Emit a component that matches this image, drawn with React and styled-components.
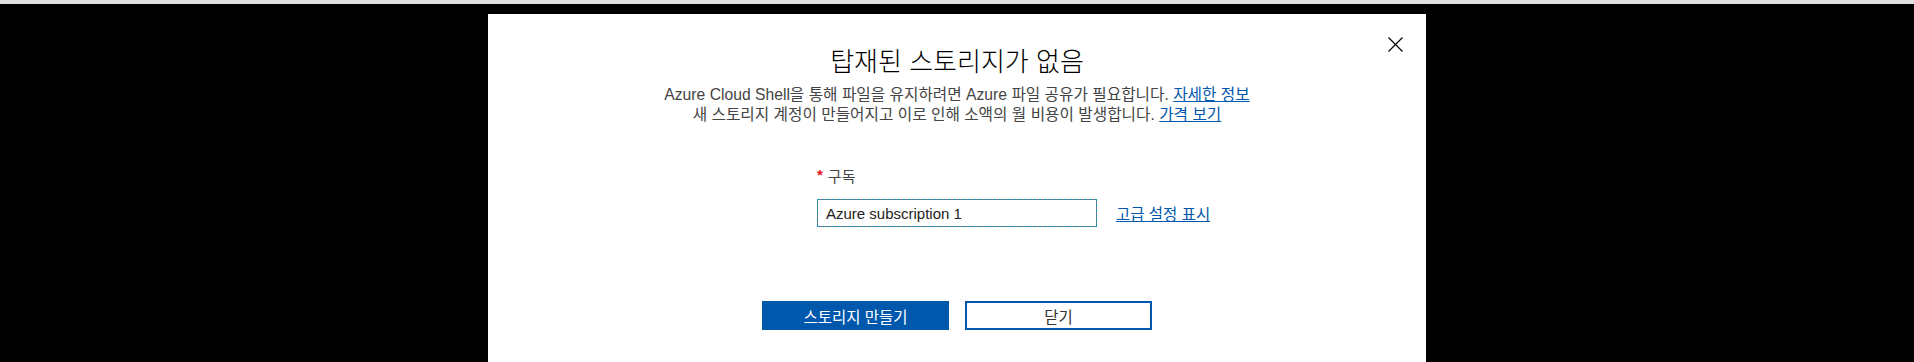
import React from 'react';
import styled, { createGlobalStyle } from 'styled-components';

const GlobalStyle = createGlobalStyle`
  html, body {
    margin: 0;
    padding: 0;
    background: #000;
    overflow: hidden;
  }
  body {
    font-family: "Liberation Sans", "Noto Sans CJK KR", sans-serif;
  }
`;

const TopStrip = styled.div`
  height: 4px;
  background: #e0e0e0;
`;

const Stage = styled.div`
  padding-top: 10px;
  display: flex;
  justify-content: center;
`;

const Dialog = styled.section`
  position: relative;
  width: 938px;
  min-height: 360px;
  background: #fff;
  padding-top: 31px;
  box-sizing: border-box;
  display: flex;
  flex-direction: column;
  align-items: center;
`;

const CloseButton = styled.button`
  position: absolute;
  top: 16px;
  right: 17px;
  width: 28px;
  height: 28px;
  padding: 0;
  border: none;
  background: transparent;
  display: flex;
  align-items: center;
  justify-content: center;
  cursor: pointer;
`;

const Title = styled.h2`
  margin: 0;
  font-size: 26px;
  line-height: 34px;
  font-weight: 300;
  color: #000;
`;

const Description = styled.p`
  margin: 6px 0 0;
  font-size: 15.7px;
  line-height: 20px;
  color: #444;
  text-align: center;
`;

const Link = styled.a`
  color: #0058ad;
  text-decoration: underline;
  cursor: pointer;
`;

const FormGrid = styled.div`
  margin-top: 42px;
  width: 100%;
  display: grid;
  grid-template-columns: 1fr 280px 1fr;
  row-gap: 12px;
  align-items: center;
`;

const Label = styled.label`
  grid-column: 2;
  font-size: 15px;
  line-height: 20px;
  color: #444;
`;

const Required = styled.span`
  color: #e81123;
  font-weight: bold;
  margin-right: 5px;
  position: relative;
  top: -2px;
`;

const Select = styled.div`
  grid-column: 2;
  height: 28px;
  box-sizing: border-box;
  border: 1px solid #7a7a7a;
  outline: 1px dashed #1b94b8;
  outline-offset: -1px;
  padding: 0 8px;
  display: flex;
  align-items: center;
  font-size: 15px;
  color: #222;
`;

const SideLink = styled(Link)`
  grid-column: 3;
  justify-self: start;
  margin-left: 19px;
  font-size: 15.5px;
`;

const Actions = styled.div`
  margin-top: 74px;
  display: flex;
  gap: 16px;
`;

const Button = styled.button`
  width: 187px;
  height: 29px;
  box-sizing: border-box;
  font-family: inherit;
  font-size: 15.5px;
  cursor: pointer;
  border: 2px solid #0058ad;
  background: ${p => (p.$primary ? '#0058ad' : '#fff')};
  color: ${p => (p.$primary ? '#fff' : '#333')};
`;

const CloseIcon = () => (
  <svg width="15" height="15" viewBox="0 0 15 15">
    <path d="M0.5 0.5 L14.5 14.5 M14.5 0.5 L0.5 14.5" stroke="#000" strokeWidth="1.2" fill="none" />
  </svg>
);

export default function App() {
  return (
    <>
      <GlobalStyle />
      <TopStrip />
      <Stage>
        <Dialog>
          <CloseButton aria-label="닫기">
            <CloseIcon />
          </CloseButton>
          <Title>탑재된 스토리지가 없음</Title>
          <Description>
            Azure Cloud Shell을 통해 파일을 유지하려면 Azure 파일 공유가 필요합니다. <Link>자세한 정보</Link>
            <br />
            새 스토리지 계정이 만들어지고 이로 인해 소액의 월 비용이 발생합니다. <Link>가격 보기</Link>
          </Description>
          <FormGrid>
            <Label>
              <Required>*</Required>구독
            </Label>
            <span />
            <span />
            <Select>Azure subscription 1</Select>
            <SideLink>고급 설정 표시</SideLink>
          </FormGrid>
          <Actions>
            <Button $primary>스토리지 만들기</Button>
            <Button>닫기</Button>
          </Actions>
        </Dialog>
      </Stage>
    </>
  );
}
